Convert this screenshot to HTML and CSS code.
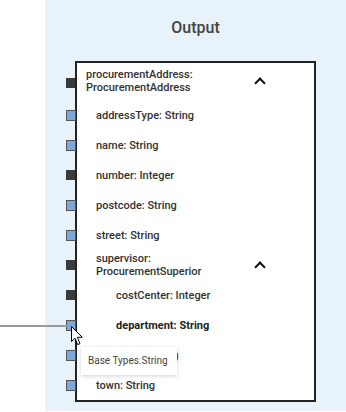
FILE: index.html
```html
<html>
    <head>
        <meta charset="UTF-8">
        <title>Output</title>
        <link rel="stylesheet" href="styles.css">
    </head>
    <body>
        <div class="canvas">
            <div class="gutter"></div>
            <div class="panel">
                <div class="panel-title">Output</div>
                <div class="tree">
                    <div class="row head">
                        <span class="port dark"></span>
                        <span class="label">procurementAddress:<br>ProcurementAddress</span>
                        <span class="chev"></span>
                    </div>
                    <div class="row lv1"><span class="port"></span><span class="label">addressType: String</span></div>
                    <div class="row lv1"><span class="port"></span><span class="label">name: String</span></div>
                    <div class="row lv1"><span class="port dark"></span><span class="label">number: Integer</span></div>
                    <div class="row lv1"><span class="port"></span><span class="label">postcode: String</span></div>
                    <div class="row lv1"><span class="port"></span><span class="label">street: String</span></div>
                    <div class="row lv1 sub">
                        <span class="port dark"></span>
                        <span class="label">supervisor:<br>ProcurementSuperior</span>
                        <span class="chev"></span>
                    </div>
                    <div class="row lv2"><span class="port dark"></span><span class="label">costCenter: Integer</span></div>
                    <div class="row lv2"><span class="port"></span><span class="label bold">department: String</span></div>
                    <div class="row lv2"><span class="port"></span><span class="label">name: String</span></div>
                    <div class="row lv1"><span class="port"></span><span class="label">town: String</span></div>
                </div>
            </div>

            <!-- link being dragged + tooltip -->
            <div class="wire"></div>
            <div class="tip">Base Types.String</div>
            <svg class="cursor" width="13" height="20" viewBox="0 0 13 20">
                <path d="M0.5 0.5 L0.5 15.5 L4 12.2 L6.6 18.6 L9 17.6 L6.4 11.3 L11.3 11.3 Z" fill="#fff" stroke="#000" stroke-width="1" stroke-linejoin="round"/>
            </svg>
        </div>
    </body>
</html>
```

FILE: styles.css
```css
/* colours
panel : #e8f2fa
port blue : #7ba7da
port dark : #3a3a3a
*/
html, body {
  margin: 0;
  padding: 0;
  background: #fff;
}
body {
  font-family: Roboto, 'Liberation Sans', sans-serif;
  font-size: 11px;
  color: #333;
}

.canvas {
  position: relative;
  display: flex;
  width: 346px;
  height: 412px;
  overflow: hidden;
}
.gutter {
  width: 45px;
  flex: none;
}

.panel {
  width: 301px;
  height: 411px;
  background-color: #e8f2fa;
  padding-top: 18px;
  box-sizing: border-box;
}
.panel-title {
  text-align: center;
  font-size: 16px;
  font-weight: 500;
  line-height: 20px;
  color: #444;
  margin-bottom: 23px;
}

.tree {
  margin: 0 30px;
  height: 341px;
  box-sizing: border-box;
  border: 2px solid #222;
  background: #fff;
  display: flex;
  flex-direction: column;
}

.row {
  position: relative;
  display: flex;
  align-items: center;
  height: 30px;
  flex: none;
  font-weight: 500;
  line-height: 13px;
}
.row.head {
  height: 37px;
  padding-left: 9px;
  padding-bottom: 2px;
  box-sizing: border-box;
}
.lv1 { padding-left: 19px; }
.lv2 { padding-left: 39px; }

.bold { font-weight: 700; color: #222; }

.chev {
  margin-left: auto;
  margin-right: 50px;
  width: 6px;
  height: 6px;
  border-left: 2.5px solid #111;
  border-top: 2.5px solid #111;
  transform: rotate(45deg);
  margin-top: 4px;
}

.port {
  position: absolute;
  left: -11px;
  top: 50%;
  width: 10px;
  height: 11px;
  margin-top: -5px;
  background: #7ba7da;
  border: 1px solid #555;
  box-sizing: border-box;
}
.port.dark {
  width: 9px;
  height: 10px;
  background: #3a3a3a;
  border-color: #3a3a3a;
}
.head .port { margin-top: -4px; }

.wire {
  position: absolute;
  left: 0;
  top: 325px;
  width: 67px;
  height: 1.5px;
  background: #999;
}
.tip {
  position: absolute;
  left: 81px;
  top: 347px;
  width: 96px;
  height: 28px;
  box-sizing: border-box;
  padding-left: 7px;
  line-height: 28px;
  background: #fff;
  color: #444;
  font-size: 10px;
  box-shadow: 0 1px 4px rgba(0, 0, 0, 0.18);
}
.cursor {
  position: absolute;
  left: 71px;
  top: 326px;
}
```
